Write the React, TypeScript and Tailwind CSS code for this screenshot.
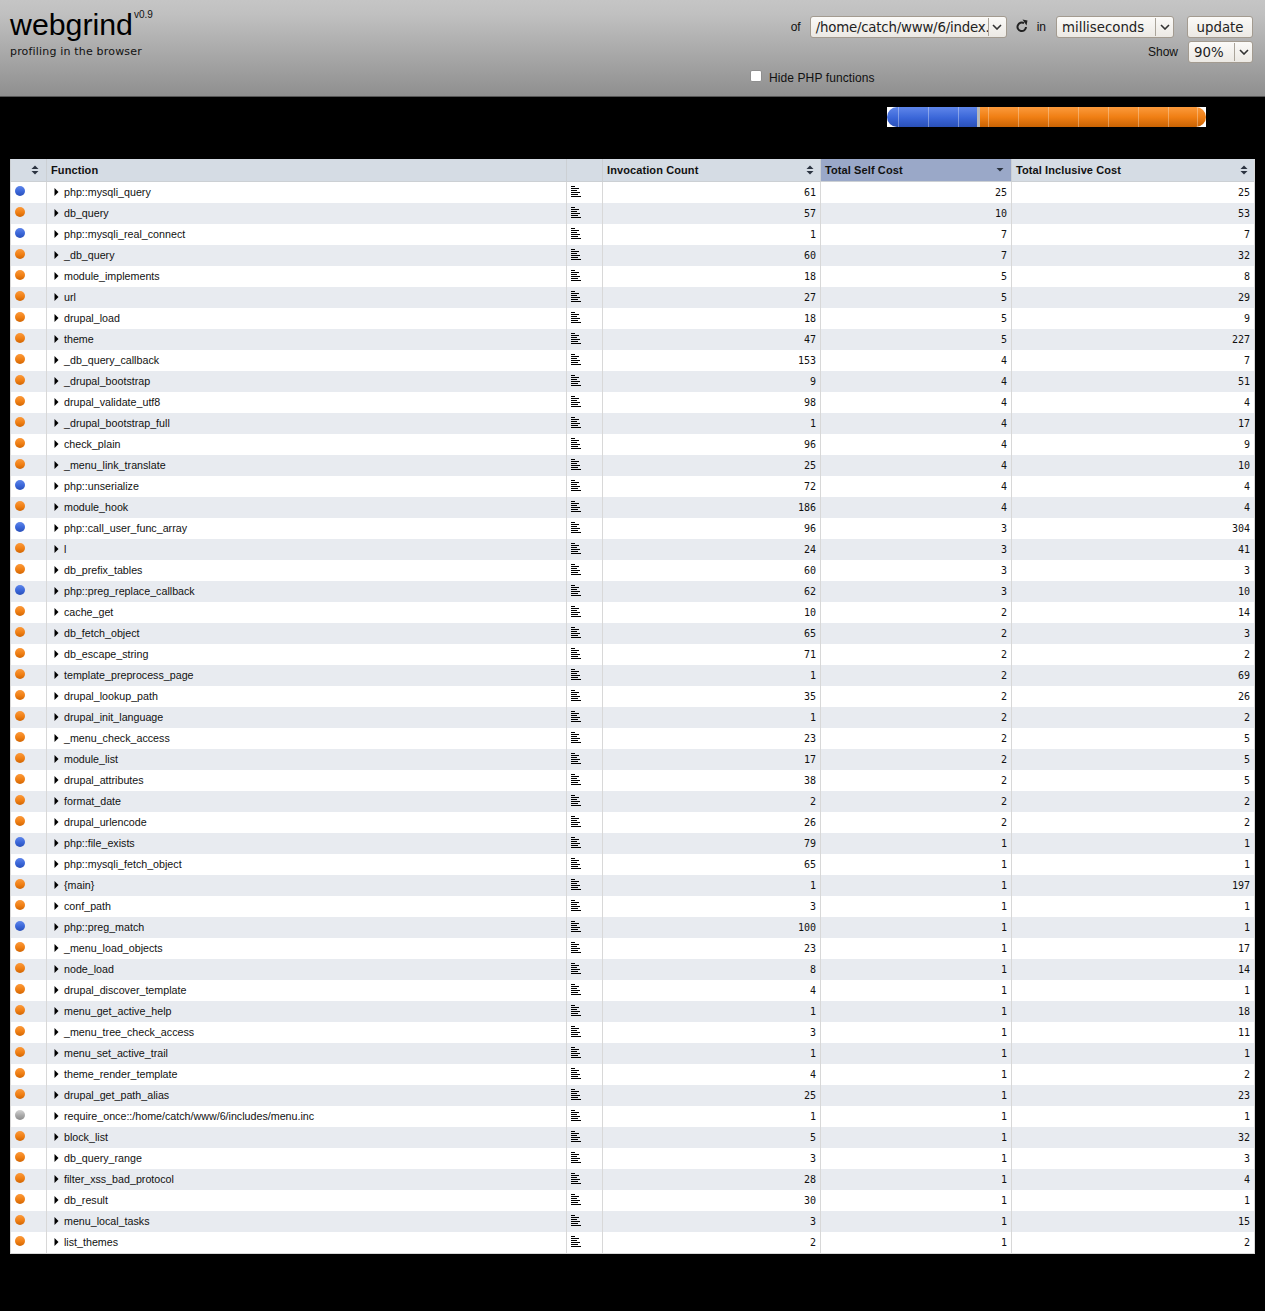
import React from "react";

type Row = [string, "b" | "o" | "g", number, number, number];

const rows: Row[] = [
  ["php::mysqli_query", "b", 61, 25, 25],
  ["db_query", "o", 57, 10, 53],
  ["php::mysqli_real_connect", "b", 1, 7, 7],
  ["_db_query", "o", 60, 7, 32],
  ["module_implements", "o", 18, 5, 8],
  ["url", "o", 27, 5, 29],
  ["drupal_load", "o", 18, 5, 9],
  ["theme", "o", 47, 5, 227],
  ["_db_query_callback", "o", 153, 4, 7],
  ["_drupal_bootstrap", "o", 9, 4, 51],
  ["drupal_validate_utf8", "o", 98, 4, 4],
  ["_drupal_bootstrap_full", "o", 1, 4, 17],
  ["check_plain", "o", 96, 4, 9],
  ["_menu_link_translate", "o", 25, 4, 10],
  ["php::unserialize", "b", 72, 4, 4],
  ["module_hook", "o", 186, 4, 4],
  ["php::call_user_func_array", "b", 96, 3, 304],
  ["l", "o", 24, 3, 41],
  ["db_prefix_tables", "o", 60, 3, 3],
  ["php::preg_replace_callback", "b", 62, 3, 10],
  ["cache_get", "o", 10, 2, 14],
  ["db_fetch_object", "o", 65, 2, 3],
  ["db_escape_string", "o", 71, 2, 2],
  ["template_preprocess_page", "o", 1, 2, 69],
  ["drupal_lookup_path", "o", 35, 2, 26],
  ["drupal_init_language", "o", 1, 2, 2],
  ["_menu_check_access", "o", 23, 2, 5],
  ["module_list", "o", 17, 2, 5],
  ["drupal_attributes", "o", 38, 2, 5],
  ["format_date", "o", 2, 2, 2],
  ["drupal_urlencode", "o", 26, 2, 2],
  ["php::file_exists", "b", 79, 1, 1],
  ["php::mysqli_fetch_object", "b", 65, 1, 1],
  ["{main}", "o", 1, 1, 197],
  ["conf_path", "o", 3, 1, 1],
  ["php::preg_match", "b", 100, 1, 1],
  ["_menu_load_objects", "o", 23, 1, 17],
  ["node_load", "o", 8, 1, 14],
  ["drupal_discover_template", "o", 4, 1, 1],
  ["menu_get_active_help", "o", 1, 1, 18],
  ["_menu_tree_check_access", "o", 3, 1, 11],
  ["menu_set_active_trail", "o", 1, 1, 1],
  ["theme_render_template", "o", 4, 1, 2],
  ["drupal_get_path_alias", "o", 25, 1, 23],
  ["require_once::/home/catch/www/6/includes/menu.inc", "g", 1, 1, 1],
  ["block_list", "o", 5, 1, 32],
  ["db_query_range", "o", 3, 1, 3],
  ["filter_xss_bad_protocol", "o", 28, 1, 4],
  ["db_result", "o", 30, 1, 1],
  ["menu_local_tasks", "o", 3, 1, 15],
  ["list_themes", "o", 2, 1, 2],
];

const dotClass = {
  b: "bg-[linear-gradient(#5f86ea,#3a66d8_55%,#2a50b8)]",
  o: "bg-[linear-gradient(#fb9a3c,#f07f14_55%,#d06604)]",
  g: "bg-[linear-gradient(#d4d4d4,#a8a8a8_55%,#8c8c8c)]",
};

function SortIcon({ down }: { down?: boolean }) {
  return (
    <svg width="8" height="10" viewBox="0 0 8 10" className="shrink-0">
      {!down && <path d="M4 0.5 L7.5 4 L0.5 4 Z" fill="#2b3340" />}
      <path d={down ? "M0.5 3 L7.5 3 L4 6.5 Z" : "M0.5 6 L7.5 6 L4 9.5 Z"} fill="#2b3340" />
    </svg>
  );
}

function CallIcon() {
  return (
    <svg width="10" height="11" viewBox="0 0 10 11" className="mb-[2px] block" shapeRendering="crispEdges">
      <path d="M0 0.5H4M0 2.5H8M0 4.5H6M0 6.5H9M0 8.5H7M0 10.5H10" stroke="#000" strokeWidth="1" />
    </svg>
  );
}

function Chevron() {
  return (
    <svg width="10" height="6" viewBox="0 0 10 6">
      <path d="M1 1 L5 5 L9 1" fill="none" stroke="#333" strokeWidth="1.6" />
    </svg>
  );
}

function FakeSelect({ value, className }: { value: string; className: string }) {
  return (
    <div
      className={`flex h-[22px] items-center overflow-hidden rounded-[3px] border border-[#a39b90] bg-[linear-gradient(#fbfaf8,#ece9e4)] text-[13.33px] leading-none text-[#222] font-['DejaVu_Sans',sans-serif] ${className}`}
    >
      <span className="flex-1 overflow-hidden whitespace-nowrap pl-[5px] pt-[2px]">{value}</span>
      <span className="flex h-[18px] w-[18px] shrink-0 items-center justify-center border-l border-[#aaa49a]">
        <Chevron />
      </span>
    </div>
  );
}

const blueTicks = [12, 30, 30];
const orangeTicks = [9, 30, 30, 30, 30, 30, 30, 29];

export default function App() {
  return (
    <div className="min-h-[1311px] bg-black font-['Liberation_Sans',Arial,sans-serif]">
      <header className="flex h-[97px] justify-between border-b border-[#555] bg-[linear-gradient(#c5c5c5,#c0c0c0_15%,#8f8f8f)] pl-[10px] text-[#111]">
        <div className="pt-[6px]">
          <div className="flex items-start">
            <span className="text-[30.3px] leading-[37px] text-black">webgrind</span>
            <span className="ml-[1px] mt-[3px] text-[10px] leading-[12px]">v0.9</span>
          </div>
          <p className="mt-[2px] text-[11px] leading-[14px] tracking-[0.18px] text-[#111] font-['DejaVu_Sans',sans-serif]">
            profiling in the browser
          </p>
        </div>
        <div className="flex w-[515px] flex-col pt-[16px] pr-[12px]">
          <div className="flex items-center justify-end">
            <span className="mr-[9px] text-[12px]">of</span>
            <FakeSelect value="/home/catch/www/6/index." className="w-[197px] tracking-[-0.2px]" />
            <svg width="12" height="14" viewBox="0 0 24 28" className="ml-[9px] mr-[9px] mb-[2px]">
              <path d="M20 16a8.5 8.5 0 1 1-4-7.5" fill="none" stroke="#222" strokeWidth="4" />
              <path d="M13 1 L23 3 L21 13 Z" fill="#222" />
            </svg>
            <span className="mr-[10px] text-[12px]">in</span>
            <FakeSelect value="milliseconds" className="w-[118px]" />
            <button className="ml-[13px] h-[22px] w-[66px] rounded-[3px] border border-[#a39b90] bg-[linear-gradient(#fbfaf8,#ece9e4)] pt-[2px] text-[13.33px] leading-none text-[#222] font-['DejaVu_Sans',sans-serif]">
              update
            </button>
          </div>
          <div className="mt-[3px] flex items-center justify-end">
            <span className="mr-[10px] text-[12px]">Show</span>
            <FakeSelect value="90%" className="w-[65px]" />
          </div>
          <label className="mt-[4px] flex items-center">
            <span className="h-[12px] w-[12px] rounded-[2px] border border-[#8f8f8f] bg-white" />
            <span className="ml-[7px] pt-[4px] text-[12px] leading-[14px] tracking-[0.1px]">Hide PHP functions</span>
          </label>
        </div>
      </header>

      <div className="ml-[887px] mt-[10px] flex h-[20px] w-[319px] overflow-hidden bg-white">
        <div className="flex w-[90px] overflow-hidden rounded-l-[10px] bg-[linear-gradient(#5f86ea,#3a66d8_55%,#2a50b8)]">
          {blueTicks.map((w, i) => (
            <div key={i} style={{ width: w }} className="h-full border-r border-white/35" />
          ))}
        </div>
        <div className="w-[3px] bg-[#b8b8b8]" />
        <div className="flex flex-1 overflow-hidden rounded-r-[10px] bg-[linear-gradient(#fb9a3c,#f07f14_50%,#c96304)]">
          {orangeTicks.map((w, i) => (
            <div key={i} style={{ width: w }} className="h-full border-r border-white/30" />
          ))}
        </div>
      </div>

      <table className="ml-[10px] mt-[32px] w-[1245px] table-fixed border-separate border-spacing-0 border-r border-b border-[#d8d8d8] bg-white">
        <colgroup>
          <col className="w-[37px]" />
          <col className="w-[520px]" />
          <col className="w-[36px]" />
          <col className="w-[218px]" />
          <col className="w-[191px]" />
          <col />
        </colgroup>
        <thead>
          <tr className="h-[23px] bg-[#d5dce4] text-left text-[11px] font-bold tracking-[0.1px] text-[#111]">
            <th className="border-r border-b border-l border-[#ccd0d4] pr-[7px]">
              <div className="flex justify-end">
                <SortIcon />
              </div>
            </th>
            <th className="border-r border-b border-[#ccd0d4] pl-[4px]">Function</th>
            <th className="border-r border-b border-[#ccd0d4]" />
            <th className="border-r border-b border-[#ccd0d4] px-[4px]">
              <div className="flex items-center justify-between pr-[2px]">
                Invocation Count
                <SortIcon />
              </div>
            </th>
            <th className="border-r border-b border-[#ccd0d4] bg-[#9aa8c8] px-[4px]">
              <div className="flex items-center justify-between pr-[3px]">
                Total Self Cost
                <SortIcon down />
              </div>
            </th>
            <th className="border-b border-[#ccd0d4] px-[4px]">
              <div className="flex items-center justify-between pr-[2px]">
                Total Inclusive Cost
                <SortIcon />
              </div>
            </th>
          </tr>
        </thead>
        <tbody>
          {rows.map((r, i) => (
            <tr key={i} className={`h-[21px] text-[10.7px] text-[#111] ${i % 2 ? "bg-[#e8ebf0]" : "bg-white"}`}>
              <td className="border-r border-l border-[#d8d8d8] pl-[4px] align-top">
                <div className={`mt-[4px] h-[10px] w-[10px] rounded-full ${dotClass[r[1]]}`} />
              </td>
              <td className="border-r border-[#d8d8d8] pl-[7px]">
                <div className="flex items-center">
                  <svg width="5" height="8" viewBox="0 0 5 8" className="mr-[5px] shrink-0">
                    <path d="M0.5 0 L4.5 4 L0.5 8 Z" fill="#000" />
                  </svg>
                  <span>{r[0]}</span>
                </div>
              </td>
              <td className="border-r border-[#d8d8d8] pl-[4px]">
                <CallIcon />
              </td>
              {[r[2], r[3], r[4]].map((n, j) => (
                <td
                  key={j}
                  className={`pl-[4px] text-right text-[10px] font-['DejaVu_Sans_Mono',monospace] ${j < 2 ? "border-r border-[#d8d8d8] pr-[4px]" : "pr-[4px]"}`}
                >
                  {n}
                </td>
              ))}
            </tr>
          ))}
        </tbody>
      </table>
    </div>
  );
}
